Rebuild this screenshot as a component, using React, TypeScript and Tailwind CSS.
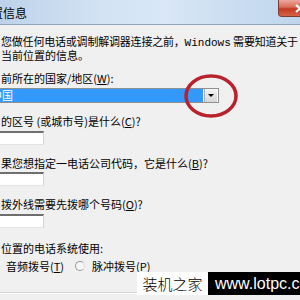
import React from "react";

const cjk = "font-['Noto_Sans_CJK_SC',sans-serif]";

const Key = ({ k }: { k: string }) => (
  <>
    (<span className="underline">{k}</span>)
  </>
);

const Field = () => (
  <div className="h-[14px] w-[44px] border-t-2 border-r border-b border-t-[#6f6f6f] border-r-[#d4d4d4] border-b-[#e4e4e4] bg-white" />
);

const App = () => {
  return (
    <div
      className={`relative h-[300px] w-[300px] overflow-hidden bg-[#f0f0f0] text-black ${cjk}`}
    >
      {/* title bar */}
      <div className="flex h-[25px] items-start justify-between border-b border-[#8ea3bc] bg-[linear-gradient(90deg,#bdd2ea_0%,#d3e3f4_35%,#d9e7f6_55%,#c9dcf1_80%,#c0d5ed_100%)]">
        <span className="ml-[-21px] mt-[6px] text-[12px] leading-[13px] whitespace-nowrap">
          位置信息
        </span>
        <div className="mr-[-21px] flex h-[17px] w-[43px] shrink-0 items-center justify-center rounded-bl-[4px] border border-t-0 border-[#7d3a32] bg-[linear-gradient(180deg,#eaa99d_0%,#d86a56_45%,#c2391f_55%,#d4624a_100%)]">
          <svg width="10" height="9" viewBox="0 0 10 9">
            <path d="M1 1 L9 8 M9 1 L1 8" stroke="#fff" strokeWidth="2.2" />
          </svg>
        </div>
      </div>

      {/* body */}
      <div className="flex flex-col pl-[1px] pt-[10px] text-[11px] leading-[12px]">
        <p className="whitespace-nowrap tracking-[-0.2px]">
          您做任何电话或调制解调器连接之前，
          <span className="font-['Liberation_Mono',monospace] tracking-normal">Windows</span> 需要知道关于
        </p>
        <p className="whitespace-nowrap">当前位置的信息。</p>

        <p className="mt-[11px] whitespace-nowrap">
          前所在的国家/地区<Key k="W" />:
        </p>

        <div className="ml-[-1px] mt-[4px] flex h-[15px] w-[219px] border-y border-r border-[#8f9091] bg-white">
          <div className="flex h-full w-[203px] items-center overflow-hidden bg-[#3399ff] text-white">
            <span className="ml-[-9px] leading-[13px] whitespace-nowrap">中国</span>
          </div>
          <div className="ml-[1px] flex h-full w-[13px] items-center justify-center border-l border-[#aeb0b2] bg-[linear-gradient(180deg,#f6f6f6_0%,#e4e4e4_50%,#d8d8d8_100%)]">
            <div className="h-0 w-0 border-x-[3px] border-t-[3px] border-x-transparent border-t-black" />
          </div>
        </div>

        <p className="mt-[12px] whitespace-nowrap">
          的区号 (或城市号)是什么<Key k="C" />?
        </p>
        <div className="ml-[-1px] mt-[4px]">
          <Field />
        </div>

        <p className="mt-[12px] whitespace-nowrap">
          果您想指定一电话公司代码，它是什么<Key k="B" />?
        </p>
        <div className="ml-[-1px] mt-[3px]">
          <Field />
        </div>

        <p className="mt-[12px] whitespace-nowrap">
          拨外线需要先拨哪个号码<Key k="O" />?
        </p>
        <div className="ml-[-1px] mt-[4px]">
          <Field />
        </div>

        <p className="mt-[14px] whitespace-nowrap">位置的电话系统使用:</p>

        <div className="mt-[6px] flex h-[12px] items-center">
          <span className="ml-[5px] w-[68px] whitespace-nowrap">
            音频拨号<Key k="T" />
          </span>
          <span className="ml-[1px] h-[10px] w-[10px] rounded-full border border-[#9a9a9a] border-r-[#dcdcdc] bg-[#f6f6f6]" />
          <span className="ml-[7px] whitespace-nowrap">
            脉冲拨号<Key k="P" />
          </span>
        </div>

        <div className="ml-[-1px] mt-[20px] h-[2px] border-t border-b border-t-[#d5d5d5] border-b-white" />
      </div>

      {/* red annotation circle */}
      <svg
        className="pointer-events-none absolute left-0 top-0"
        width="300"
        height="300"
        viewBox="0 0 300 300"
      >
        <ellipse cx="211" cy="96" rx="25" ry="20" fill="none" stroke="#b9212c" strokeWidth="3.5" />
      </svg>

      {/* watermark */}
      <div className="absolute left-[137px] top-[272px] flex h-[23px]">
        <div className="flex w-[71px] items-center justify-center bg-white text-[15px] font-light leading-none">
          装机之家
        </div>
        <div className="flex w-[92px] items-center bg-black pl-[7px] font-['Liberation_Sans',sans-serif] text-[16px] leading-none text-white whitespace-nowrap">
          www.lotpc.com
        </div>
      </div>
    </div>
  );
};

export default App;
